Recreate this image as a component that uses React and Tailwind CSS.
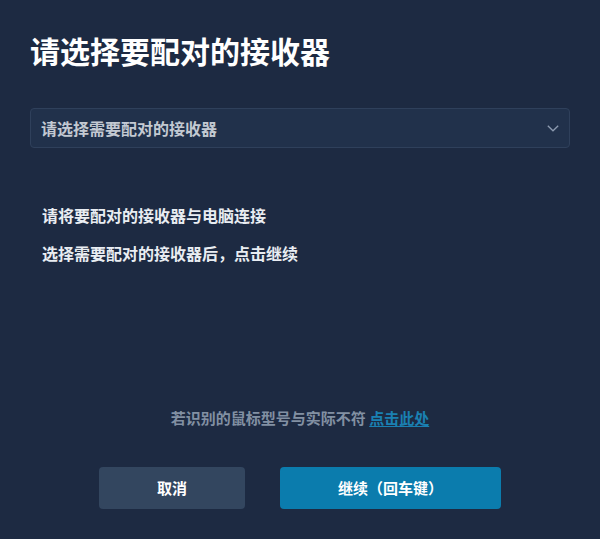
import React from "react";

const font = {
  fontFamily: '"Noto Sans CJK SC", "Noto Sans", "Liberation Sans", sans-serif',
};

function Chevron() {
  return (
    <svg width="12" height="7" viewBox="0 0 12 7" fill="none" className="text-[#8d9bb0]">
      <polyline points="0.8,0.8 6,5.8 11.2,0.8" stroke="currentColor" strokeWidth="1.3" />
    </svg>
  );
}

export default function App() {
  return (
    <div className="w-[600px] h-[539px] bg-[#1d2a42] flex flex-col px-[30px] pt-[30px] pb-[30px]" style={font}>
      {/* Title */}
      <h1 className="text-[30px] leading-10 font-bold text-white">请选择要配对的接收器</h1>

      {/* Select */}
      <button className="mt-[38px] h-10 w-full rounded-[4px] border border-[#2f405b] bg-[#21314b] flex items-center justify-between pl-[10px] pr-[10px]">
        <span className="text-[16px] font-bold text-[#c3c9d2]">请选择需要配对的接收器</span>
        <Chevron />
      </button>

      {/* Instructions */}
      <div className="mt-[55px] pl-3 flex flex-col gap-[14px] text-[16px] leading-6 font-semibold text-[#e9edf2]">
        <p>请将要配对的接收器与电脑连接</p>
        <p>选择需要配对的接收器后，点击继续</p>
      </div>

      {/* Footer */}
      <div className="mt-auto flex flex-col items-center">
        <p className="text-[15px] leading-[22px] font-semibold text-[#8290a3]">
          若识别的鼠标型号与实际不符{" "}
          <a className="text-[#1a80b2] underline underline-offset-2 cursor-pointer">点击此处</a>
        </p>
        <div className="mt-[38px] flex gap-[35px]">
          <button className="w-[146px] h-[42px] rounded-[4px] bg-[#33465f] text-white text-[15px] font-bold">
            取消
          </button>
          <button className="w-[221px] h-[42px] rounded-[4px] bg-[#0b7cad] text-white text-[15px] font-bold">
            继续（回车键）
          </button>
        </div>
      </div>
    </div>
  );
}
